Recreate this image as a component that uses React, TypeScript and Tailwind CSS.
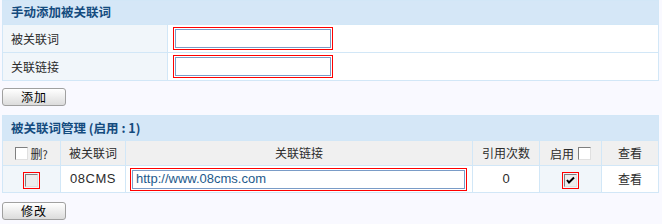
import React from "react";

const cjk = { fontFamily: '"Noto Sans CJK SC", "Liberation Sans", sans-serif' };
const latin = { fontFamily: '"Liberation Sans", "Noto Sans CJK SC", sans-serif' };

function Box({ checked = false, gray = false }: { checked?: boolean; gray?: boolean }) {
  return (
    <span
      className={`relative block w-[13px] h-[13px] border border-t-[#7f7f7f] border-l-[#7f7f7f] border-b-[#e0e0e0] border-r-[#e0e0e0] ${
        gray ? "bg-[#ececec]" : "bg-white"
      }`}
    >
      {checked && (
        <svg viewBox="0 0 11 11" className="absolute left-0 top-0 w-[11px] h-[11px]">
          <path d="M2 5 L4 7.5 L9 2.5" stroke="#000" strokeWidth="2" fill="none" />
        </svg>
      )}
    </span>
  );
}

function RedWrap({ children, className = "" }: { children: React.ReactNode; className?: string }) {
  return <span className={`inline-flex border border-[#ff0000] p-px align-middle ${className}`}>{children}</span>;
}

function Btn({ label }: { label: string }) {
  return (
    <button
      className="w-[64px] h-[18px] border border-[#a0a0a0] rounded-[3px] bg-gradient-to-b from-white to-[#dcdcdc] text-[12px] leading-[16px] text-black tracking-[1px]"
      style={cjk}
    >
      {label}
    </button>
  );
}

export default function App() {
  const td = "border border-[#d2e7f7]";
  return (
    <div className="w-[662px] h-[224px] bg-[#f9f9ff] pl-[2px] text-[12px] text-[#2b2b2b]" style={cjk}>
      <table className="w-[657px] border-collapse">
        <tbody>
          <tr className="h-[24px] bg-[#d5e7f7]">
            <td colSpan={2} className={`${td} pl-[8px] text-[12.5px] font-bold text-[#144b7e]`}>
              手动添加被关联词
            </td>
          </tr>
          <tr className="h-[28px]">
            <td className={`${td} w-[165px] bg-[#f1f6fa] pl-[8px]`}>被关联词</td>
            <td className={`${td} bg-white pl-[5px]`}>
              <RedWrap>
                <span className="block w-[156px] h-[19px] border border-[#7a9cc7] bg-white" />
              </RedWrap>
            </td>
          </tr>
          <tr className="h-[28px]">
            <td className={`${td} bg-[#f1f6fa] pl-[8px]`}>关联链接</td>
            <td className={`${td} bg-white pl-[5px]`}>
              <RedWrap>
                <span className="block w-[156px] h-[19px] border border-[#7a9cc7] bg-white" />
              </RedWrap>
            </td>
          </tr>
        </tbody>
      </table>

      <div className="mt-[7px] flex">
        <Btn label="添加" />
      </div>

      <table className="mt-[9px] w-[657px] border-collapse">
        <tbody>
          <tr className="h-[25px] bg-[#d5e7f7]">
            <td colSpan={6} className={`${td} pl-[8px] text-[12.5px] font-bold text-[#144b7e]`}>
              被关联词管理 (启用 : 1)
            </td>
          </tr>
          <tr className="h-[25px] bg-[#f0f0f0] text-center">
            <td className={`${td} w-[58px]`}>
              <span className="inline-flex items-center gap-[2px] align-middle">
                <Box />
                <span>
                  删<span className="text-[11px]">?</span>
                </span>
              </span>
            </td>
            <td className={`${td} w-[65px]`}>被关联词</td>
            <td className={`${td}`}>关联链接</td>
            <td className={`${td} w-[67px]`}>引用次数</td>
            <td className={`${td} w-[62px]`}>
              <span className="inline-flex items-center gap-[4px] align-middle">
                启用 <Box />
              </span>
            </td>
            <td className={`${td} w-[57px]`}>查看</td>
          </tr>
          <tr className="h-[27px] text-center">
            <td className={`${td} bg-[#f1f6fa]`}>
              <RedWrap className="p-0">
                <Box gray />
              </RedWrap>
            </td>
            <td className={`${td} bg-white`} style={latin}>
              <span className="text-[13px] tracking-[0.5px]">08CMS</span>
            </td>
            <td className={`${td} bg-white pl-[4px] text-left`}>
              <RedWrap>
                <span
                  className="flex items-center w-[333px] h-[19px] border border-[#7a9cc7] bg-white pl-[3px] text-[13px] text-[#1d5a8c]"
                  style={latin}
                >
                  http://www.08cms.com
                </span>
              </RedWrap>
            </td>
            <td className={`${td} bg-white`} style={latin}>
              <span className="text-[13px]">0</span>
            </td>
            <td className={`${td} bg-[#f1f6fa]`}>
              <RedWrap className="p-0">
                <Box checked gray />
              </RedWrap>
            </td>
            <td className={`${td} bg-white`}>查看</td>
          </tr>
        </tbody>
      </table>

      <div className="mt-[9px] flex">
        <Btn label="修改" />
      </div>
    </div>
  );
}
